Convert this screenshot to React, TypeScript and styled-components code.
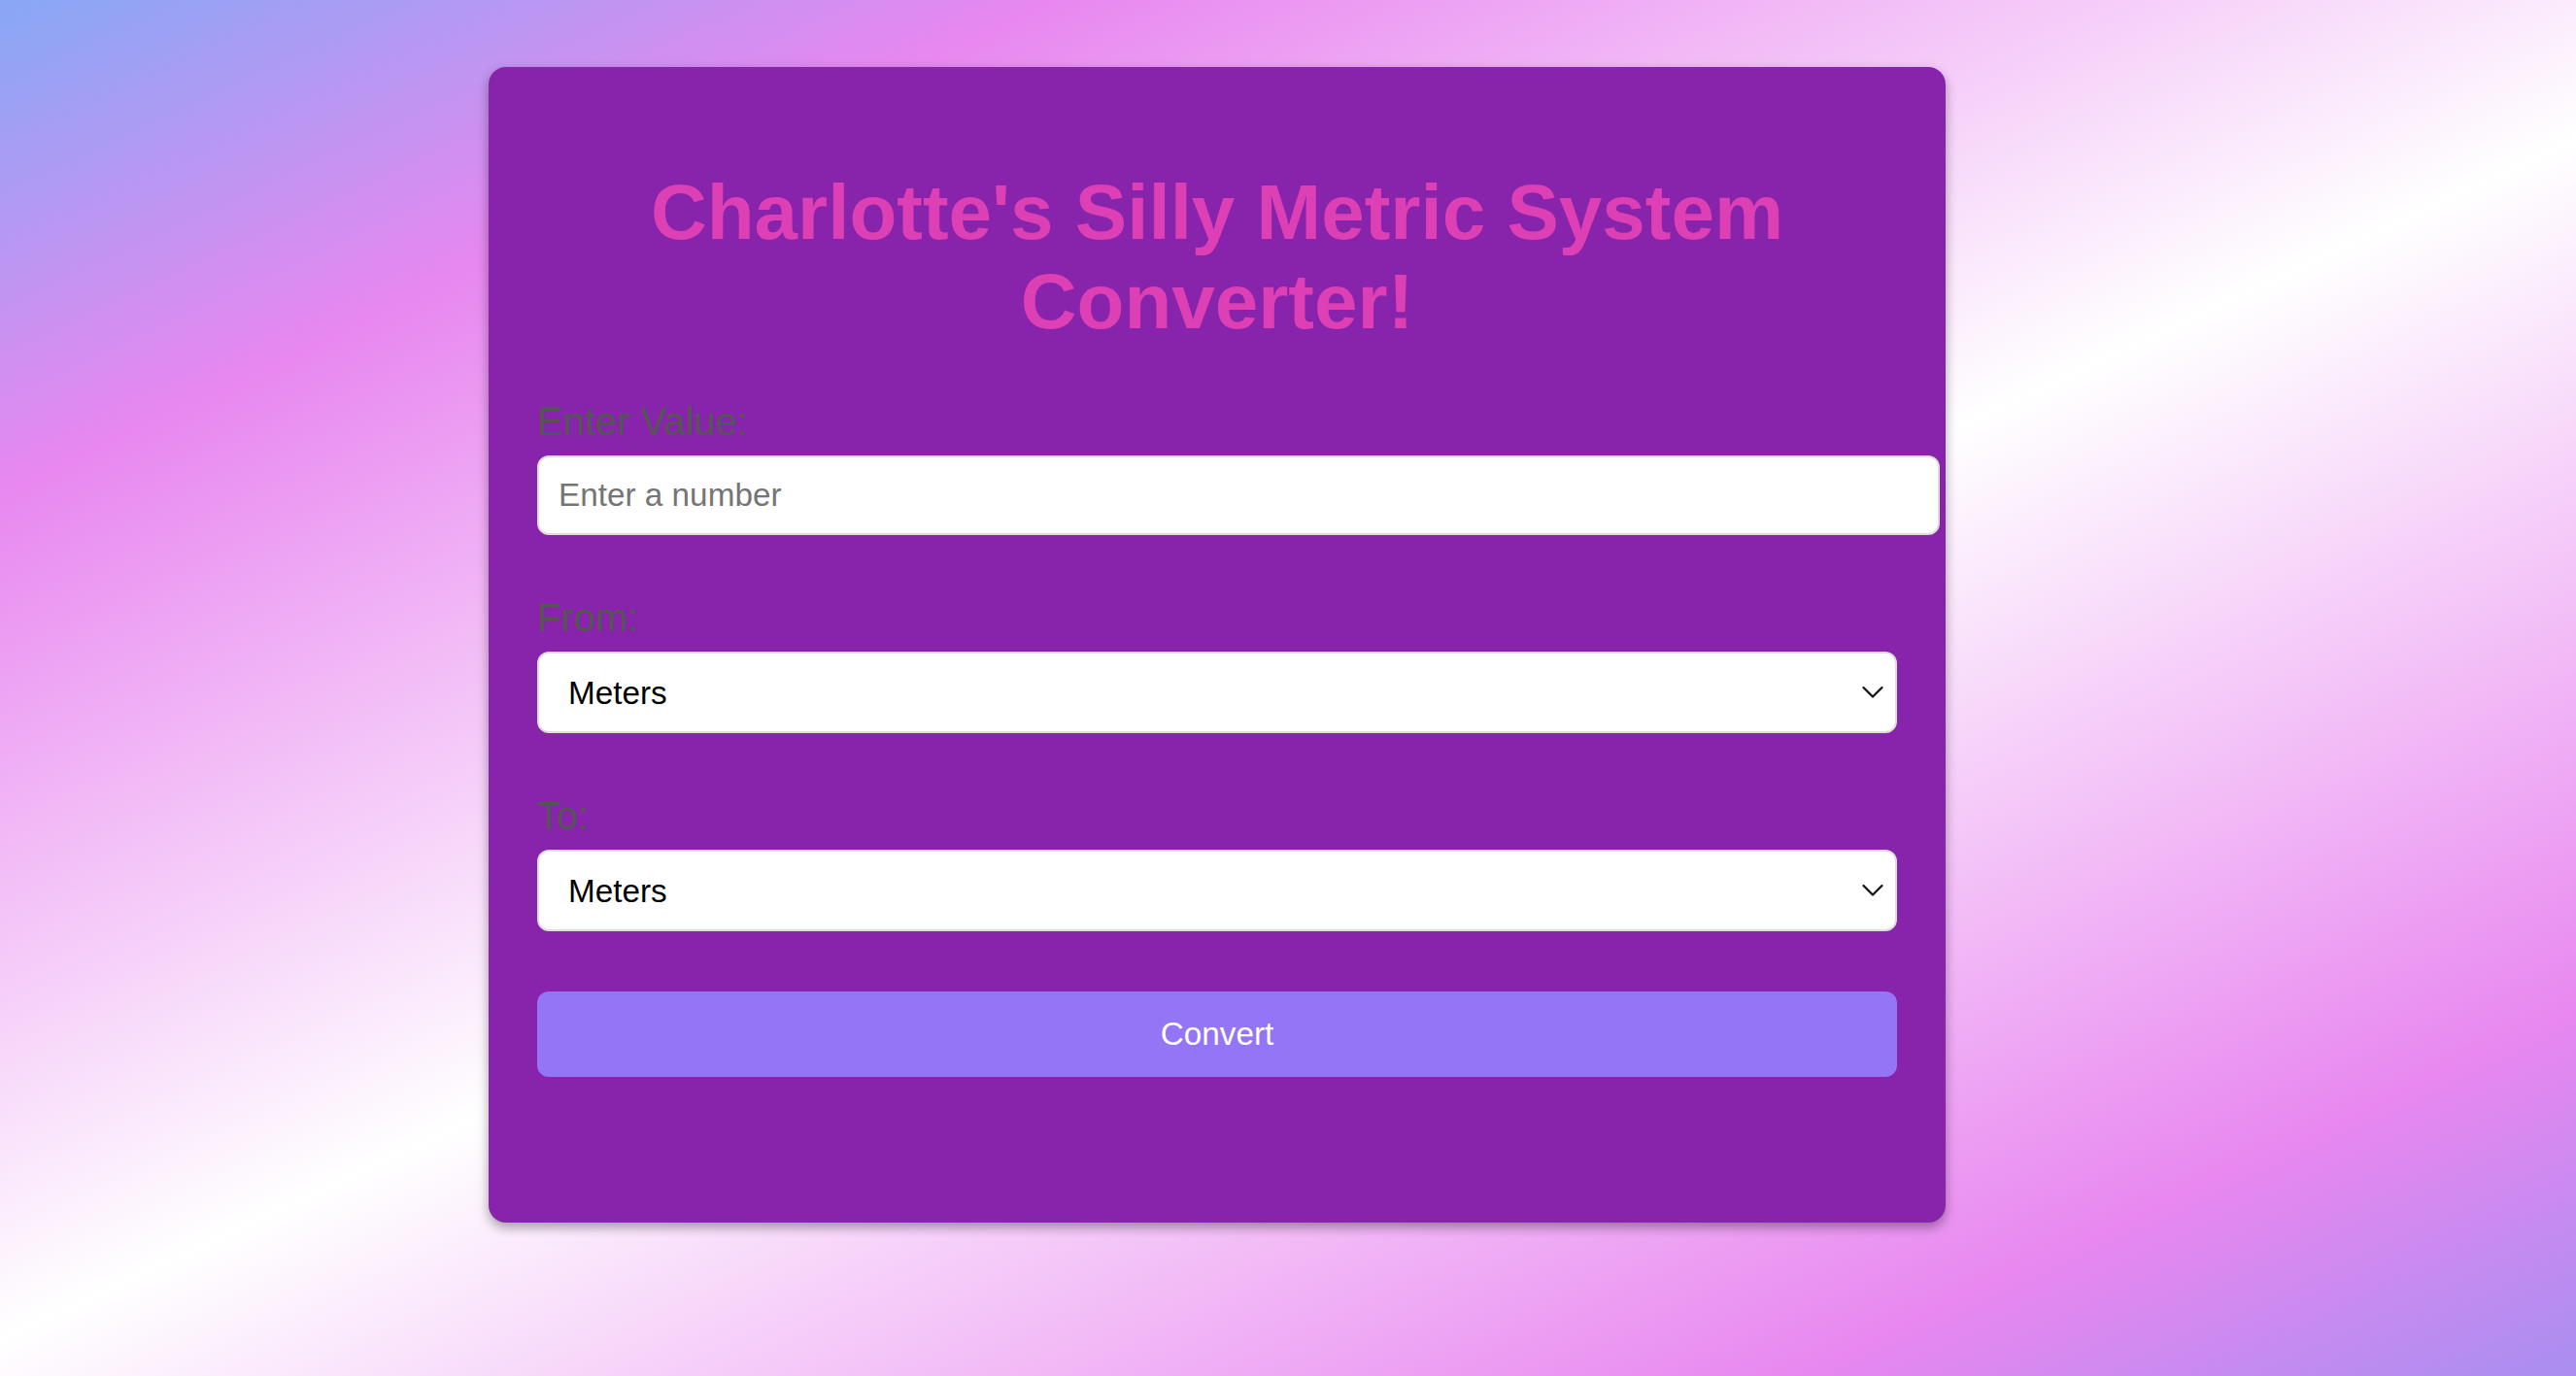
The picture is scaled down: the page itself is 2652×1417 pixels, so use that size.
import React, { useState } from "react";
import styled, { createGlobalStyle } from "styled-components";

const GlobalStyle = createGlobalStyle`
  * { box-sizing: border-box; }
  html, body { margin: 0; padding: 0; }
  body {
    min-height: 100vh;
    font-family: "Liberation Sans", Arial, sans-serif;
    background: linear-gradient(
      155deg,
      #87a8f5 0%,
      #e887f0 19%,
      #ffffff 52%,
      #e887f0 86%,
      #a98ef0 100%
    );
    background-attachment: fixed;
  }
`;

const Page = styled.div`
  min-height: 100vh;
  padding: 69px 0 0 503px;
`;

const Card = styled.div`
  width: 1500px;
  padding: 50px;
  background: #8824ab;
  border-radius: 18px;
  box-shadow: 0 5px 12px rgba(0, 0, 0, 0.35);
`;

const Title = styled.h1`
  margin: 54px 0;
  font-size: 80px;
  font-weight: bold;
  line-height: 92px;
  text-align: center;
  color: #dd3fb4;
`;

const Group = styled.div`
  margin-bottom: 62px;
`;

const Label = styled.label`
  display: block;
  margin-bottom: 12px;
  font-size: 40px;
  line-height: 46px;
  color: #555;
`;

const NumberInput = styled.input`
  box-sizing: content-box;
  width: 100%;
  height: 38px;
  padding: 20px;
  border: 2px solid #ddd;
  border-radius: 12px;
  font-family: "Liberation Sans", Arial, sans-serif;
  font-size: 33.3px;
  line-height: 38px;
  color: #000;
  background: #fff;
  outline: none;
  &::placeholder { color: #757575; }
`;

const SelectWrap = styled.div`
  position: relative;
  width: 100%;
`;

const Select = styled.select`
  appearance: none;
  -webkit-appearance: none;
  display: block;
  width: 100%;
  height: 84px;
  padding: 0 60px 0 30px;
  border: 2px solid #ddd;
  border-radius: 12px;
  background: #fff;
  color: #000;
  font-family: "Liberation Sans", Arial, sans-serif;
  font-size: 33.3px;
  outline: none;
`;

const Chevron = styled.svg`
  position: absolute;
  right: 14px;
  top: 50%;
  width: 22px;
  height: 13px;
  transform: translateY(-50%);
  pointer-events: none;
`;

const Button = styled.button`
  display: block;
  width: 100%;
  height: 88px;
  margin-top: 4px;
  border: none;
  border-radius: 12px;
  background: #9375f5;
  color: #fff;
  font-family: "Liberation Sans", Arial, sans-serif;
  font-size: 33.3px;
  cursor: pointer;
`;

const Result = styled.div`
  min-height: 100px;
  color: #fff;
  font-size: 33.3px;
  text-align: center;
`;

const units = ["Meters", "Kilometers", "Centimeters", "Millimeters"];

function UnitSelect({ id, value, onChange }: { id: string; value: string; onChange: (v: string) => void }) {
  return (
    <SelectWrap>
      <Select id={id} value={value} onChange={(e) => onChange(e.target.value)}>
        {units.map((u) => (
          <option key={u} value={u}>{u}</option>
        ))}
      </Select>
      <Chevron viewBox="0 0 22 13" fill="none">
        <path d="M1.5 1.5 L11 11 L20.5 1.5" stroke="#111" strokeWidth="2.2" strokeLinecap="round" strokeLinejoin="round" />
      </Chevron>
    </SelectWrap>
  );
}

export default function App() {
  const [value, setValue] = useState("");
  const [from, setFrom] = useState("Meters");
  const [to, setTo] = useState("Meters");

  return (
    <>
      <GlobalStyle />
      <Page>
        <Card>
          <Title>Charlotte's Silly Metric System Converter!</Title>
          <Group>
            <Label htmlFor="value">Enter Value:</Label>
            <NumberInput
              id="value"
              type="number"
              placeholder="Enter a number"
              value={value}
              onChange={(e) => setValue(e.target.value)}
            />
          </Group>
          <Group>
            <Label htmlFor="from">From:</Label>
            <UnitSelect id="from" value={from} onChange={setFrom} />
          </Group>
          <Group>
            <Label htmlFor="to">To:</Label>
            <UnitSelect id="to" value={to} onChange={setTo} />
          </Group>
          <Button type="button">Convert</Button>
          <Result />
        </Card>
      </Page>
    </>
  );
}
